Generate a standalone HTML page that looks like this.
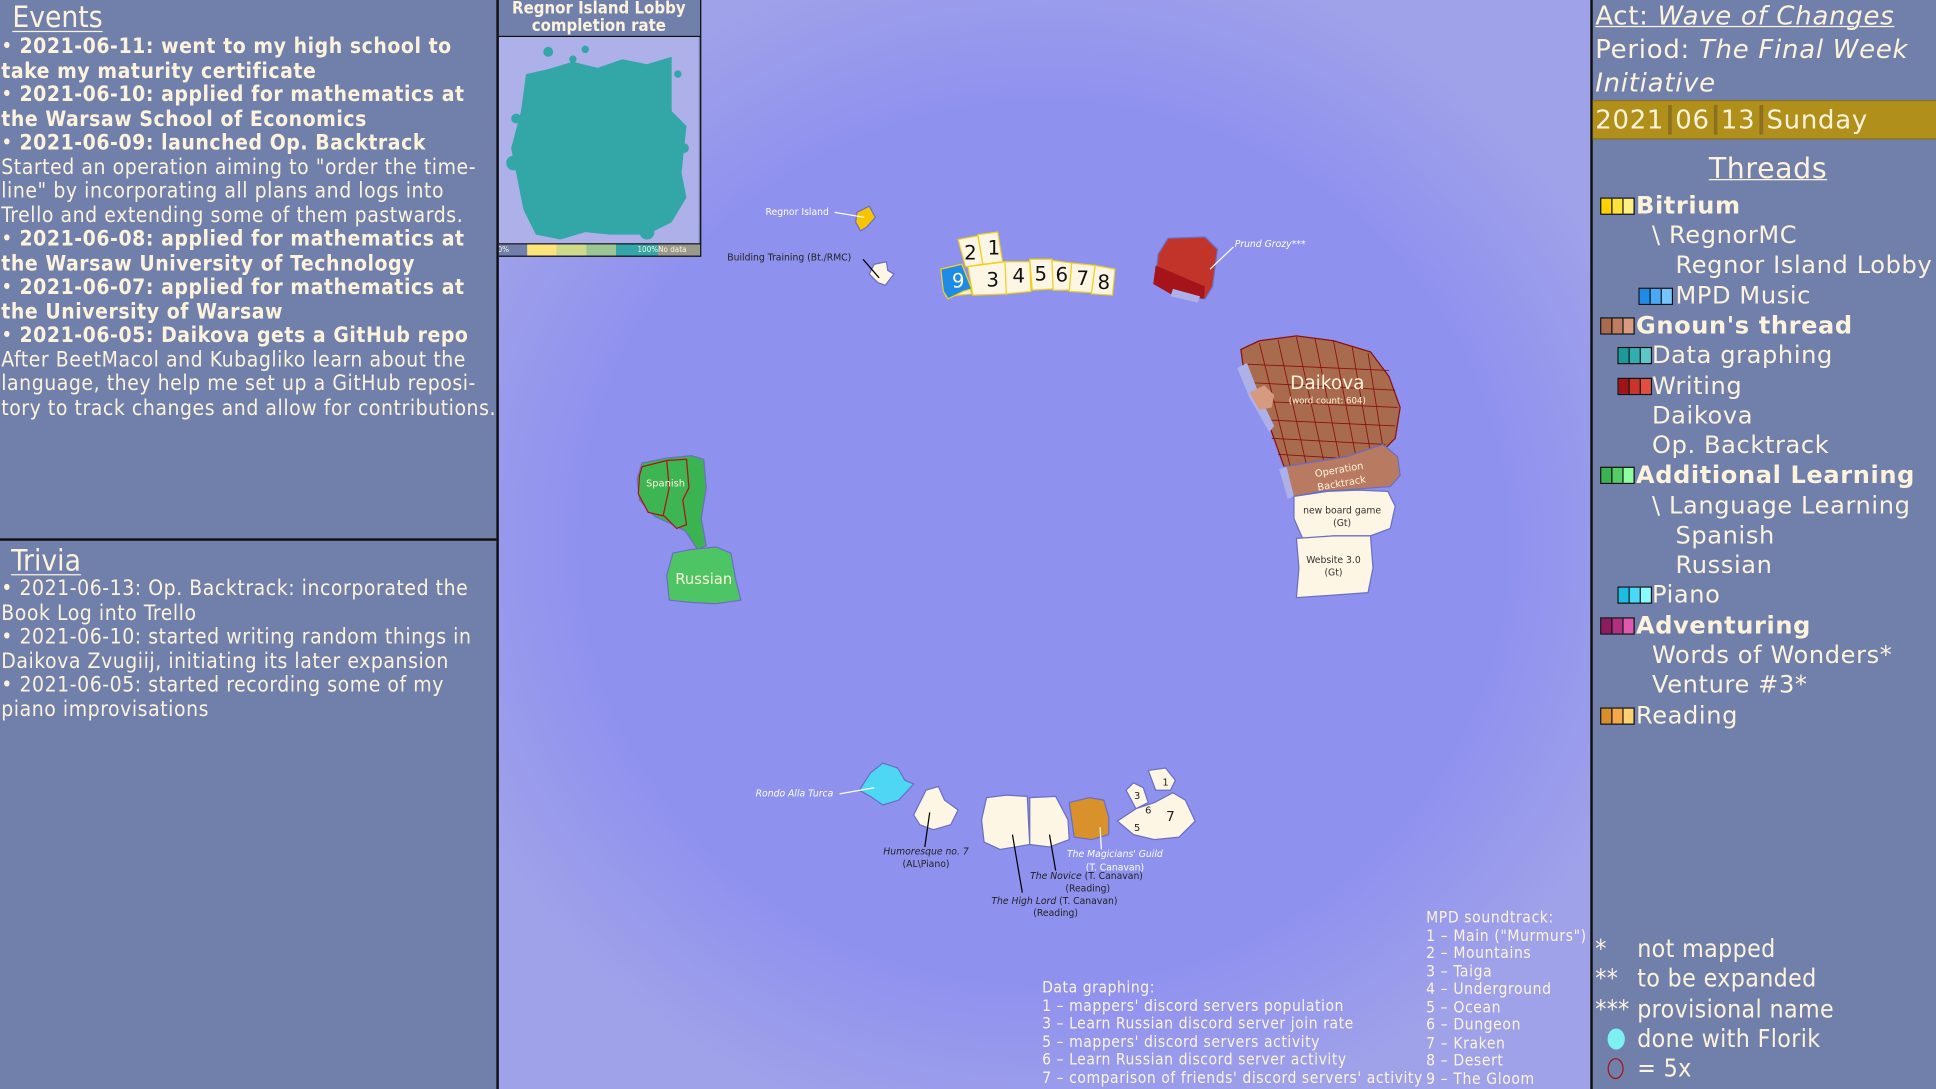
<!DOCTYPE html>
<html><head><meta charset="utf-8"><style>
html,body{margin:0;padding:0;width:1936px;height:1089px;overflow:hidden;background:#9092ee}
#w{position:absolute;left:0;top:0;width:1568px;height:882px;transform:scale(1.234694,1.234694);transform-origin:0 0;overflow:hidden}
.cond{font-family:"DejaVu Sans Condensed","DejaVu Sans","Liberation Sans",sans-serif;font-stretch:condensed}
.panel{position:absolute;background:#7180ab;color:#fdf3dc}
#left{left:0;top:0;width:402px;height:882px;border-right:2px solid #111}
#left .t{position:absolute;left:1px;font-size:17px;letter-spacing:0.45px;line-height:19.5px;white-space:nowrap}
#left b{font-weight:bold}
h1{position:absolute;margin:0;font-weight:normal;text-decoration:underline;text-decoration-thickness:1px;text-underline-offset:3px;font-size:24px;line-height:28px}
#right{left:1288px;top:0;width:280px;height:882px;border-left:2px solid #111;font-family:"DejaVu Sans",sans-serif;letter-spacing:0.5px}
#right .l{position:absolute;white-space:nowrap;font-size:19.5px;line-height:24px}
.sw{position:absolute;width:26px;height:12px;border:1px solid #111;display:flex}
.sw i{flex:1;border-right:1px solid #111}.sw i:last-child{border:0}
</style></head><body><div id="w">
<svg width="1568" height="882" style="position:absolute;left:0;top:0" font-family="DejaVu Sans, sans-serif">
<defs><radialGradient id="g" cx="845" cy="440" r="520" gradientUnits="userSpaceOnUse" gradientTransform="translate(845 440) scale(1 0.95) translate(-845 -440)">
<stop offset="0.72" stop-color="#8f91ef"/><stop offset="1" stop-color="#a0a2e9"/></radialGradient></defs>
<rect width="1568" height="882" fill="url(#g)"/>
<polygon points="694,172 704,167 709,176 702,184 697,187 693,180" fill="#f6c400" stroke="#6c6fc0"/>
<line x1="676" y1="172" x2="700" y2="176" stroke="#fff"/>
<text x="620" y="174" font-size="7.5" fill="#fff">Regnor Island</text>
<polygon points="708,214 718,212 719,219 724,222 717,231 711,229 704,222" fill="#fdf6e4" stroke="#6c6fc0"/>
<line x1="699" y1="210" x2="712" y2="225" stroke="#000"/>
<text x="589" y="211" font-size="7.5" fill="#222">Building Training (Bt./RMC)</text>
<g stroke="#f0d020" stroke-width="1" fill="#fdf6e4">
<polygon points="776,194 792,191 796,214 782,216"/>
<polygon points="792,190 808,188 812,212 796,214"/>
<polygon points="762,218 779,214 787,238 766,240"/>
<polygon points="784,216 814,212 816,238 788,239" />
<polygon points="814,212 834,212 835,236 815,238"/>
<polygon points="834,210 852,210 853,234 836,235"/>
<polygon points="852,211 868,213 866,235 853,235"/>
<polygon points="868,213 887,215 884,237 866,236"/>
<polygon points="887,215 903,218 901,239 884,238"/>
</g>
<polygon points="762,218 779,214 787,234 780,236 768,242 764,236" fill="#1e8be6" stroke="#f0d020"/>
<g font-size="16" fill="#111" text-anchor="middle">
<text x="786" y="210">2</text><text x="805" y="206">1</text><text x="776" y="233" fill="#fff">9</text>
<text x="804" y="232">3</text><text x="825" y="229">4</text><text x="843" y="227">5</text><text x="860" y="228">6</text><text x="877" y="231">7</text><text x="894" y="234">8</text></g>
<polygon points="946,193 976,192 986,202 982,232 976,242 948,238 936,225 938,206" fill="#c2342a" stroke="#6c6fc0"/>
<polygon points="936,215 976,232 975,242 948,238 934,230" fill="#a5141a"/>
<polygon points="950,234 972,240 970,245 948,240" fill="#aeb0ea"/>
<line x1="980" y1="218" x2="999" y2="200" stroke="#fff"/>
<text x="1000" y="200" font-size="7.5" font-style="italic" fill="#fff">Prund Grozy***</text>
<polygon points="1005,283 1020,276 1050,272 1080,276 1110,285 1125,305 1134,330 1130,355 1120,365 1090,370 1060,375 1040,378 1030,350 1020,325 1008,305" fill="#a86b4e" stroke="#8a1010" stroke-width="1"/>
<g stroke="#8a1010" stroke-width="0.7" fill="none">
<path d="M1010,295 L1125,300 M1014,310 L1130,316 M1018,325 L1132,330 M1024,340 L1130,345 M1030,355 L1122,360 M1035,368 L1100,372"/>
<path d="M1020,278 L1045,378 M1035,275 L1058,376 M1050,273 L1072,373 M1065,274 L1085,372 M1080,276 L1098,369 M1095,280 L1110,367 M1108,286 L1120,362"/>
</g>
<polygon points="1002,298 1010,294 1020,320 1032,345 1028,350 1012,322" fill="#aeb0ea"/>
<path d="M1012,318 L1024,312 L1032,320 L1030,330 L1020,332 Z" fill="#d59a80"/>
<text x="1075" y="315" font-size="15" fill="#fdf3dc" text-anchor="middle">Daikova</text>
<text x="1075" y="327" font-size="7" fill="#fdf3dc" text-anchor="middle">(word count: 604)</text>
<path d="M1040,378 L1090,370 L1120,360 L1132,370 L1134,385 L1126,394 L1100,396 L1070,398 L1048,402 L1042,392 Z" fill="#b97a62" stroke="#6c6fc0"/>
<polygon points="1036,380 1042,378 1048,402 1043,404" fill="#aeb0ea"/>
<text x="1085" y="383" font-size="8" fill="#fdf3dc" text-anchor="middle" transform="rotate(-10 1085 383)">Operation</text>
<text x="1087" y="394" font-size="8" fill="#fdf3dc" text-anchor="middle" transform="rotate(-10 1087 394)">Backtrack</text>
<path d="M1048,402 L1075,398 L1100,397 L1124,398 L1130,410 L1126,428 L1110,434 L1080,434 L1055,436 L1048,420 Z" fill="#fdf6e4" stroke="#6c6fc0"/>
<text x="1087" y="416" font-size="7.5" fill="#333" text-anchor="middle">new board game</text>
<text x="1087" y="426" font-size="7.5" fill="#333" text-anchor="middle">(Gt)</text>
<path d="M1050,436 L1080,434 L1110,434 L1112,460 L1108,480 L1080,482 L1050,484 L1052,460 Z" fill="#fdf6e4" stroke="#6c6fc0"/>
<text x="1080" y="456" font-size="7.5" fill="#333" text-anchor="middle">Website 3.0</text>
<text x="1080" y="466" font-size="7.5" fill="#333" text-anchor="middle">(Gt)</text>
<path d="M520,375 L540,371 L560,369 L570,372 L572,395 L568,420 L572,442 L565,445 L555,430 L545,425 L530,418 L518,405 L516,388 Z" fill="#3bb350" stroke="#6c6fc0"/>
<path d="M520,378 L540,373 L556,372 L558,395 L553,405 L556,425 L548,428 L538,418 L525,415 L517,400 L518,385 Z" fill="#3db553" stroke="#b0121a" stroke-width="1"/>
<path d="M540,373 L542,395 L537,418" stroke="#b0121a" fill="none"/>
<text x="539" y="394" font-size="8" fill="#fdf3dc" text-anchor="middle">Spanish</text>
<path d="M545,448 L560,445 L580,443 L592,448 L596,470 L600,486 L580,489 L560,488 L542,486 L540,466 Z" fill="#4ec565" stroke="#6c6fc0"/>
<text x="570" y="473" font-size="12" fill="#fdf3dc" text-anchor="middle">Russian</text>
<path d="M705,626 L715,618 L727,622 L733,632 L740,635 L728,648 L715,652 L705,645 L696,640 Z" fill="#4dd7f5" stroke="#6c6fc0"/>
<line x1="680" y1="643" x2="708" y2="638" stroke="#fff"/>
<text x="612" y="645" font-size="7.5" font-style="italic" fill="#fff">Rondo Alla Turca</text>
<path d="M750,640 L760,637 L765,648 L776,656 L770,668 L756,672 L745,668 L740,660 Z" fill="#fdf6e4" stroke="#6c6fc0"/>
<line x1="753" y1="658" x2="749" y2="686" stroke="#000"/>
<text x="750" y="692" font-size="7.5" font-style="italic" fill="#222" text-anchor="middle">Humoresque no. 7</text>
<text x="750" y="702" font-size="7.5" fill="#222" text-anchor="middle">(AL\Piano)</text>
<path d="M799,646 L815,644 L832,645 L834,684 L810,688 L797,682 L795,664 Z" fill="#fdf6e4" stroke="#6c6fc0"/>
<path d="M834,646 L855,645 L865,664 L866,680 L850,686 L834,684 Z" fill="#fdf6e4" stroke="#6c6fc0"/>
<path d="M866,650 L882,646 L894,648 L898,662 L898,676 L884,680 L870,678 Z" fill="#d9912c" stroke="#6c6fc0"/>
<path d="M912,640 L918,634 L926,638 L930,650 L920,655 Z M930,624 L944,622 L952,632 L948,640 L936,640 Z M920,655 L935,650 L950,642 L960,648 L968,665 L955,678 L935,680 L918,676 L905,665 Z" fill="#fdf6e4" stroke="#6c6fc0"/>
<g font-size="8" fill="#222" text-anchor="middle"><text x="921" y="647">3</text><text x="944" y="636">1</text><text x="930" y="659">6</text><text x="921" y="673">5</text><text x="948" y="665" font-size="11">7</text></g>
<g stroke="#000"><line x1="820" y1="676" x2="828" y2="723"/><line x1="850" y1="676" x2="855" y2="705"/></g>
<line x1="891" y1="670" x2="892" y2="688" stroke="#fff"/>
<g font-size="7.5" fill="#222" text-anchor="middle">
<text x="903" y="694" fill="#fff"><tspan font-style="italic">The Magicians' Guild</tspan></text>
<text x="903" y="705" fill="#fff">(T. Canavan)</text>
<text x="880" y="712"><tspan font-style="italic">The Novice</tspan> (T. Canavan)</text>
<text x="881" y="722">(Reading)</text>
<text x="854" y="732"><tspan font-style="italic">The High Lord</tspan> (T. Canavan)</text>
<text x="855" y="742">(Reading)</text></g>
</svg>

<div class="cond" style="position:absolute;left:844px;top:793px;font-size:12.6px;letter-spacing:0.45px;line-height:14.6px;color:#fdf3dc;white-space:nowrap">Data graphing:<br>1 – mappers' discord servers population<br>3 – Learn Russian discord server join rate<br>5 – mappers' discord servers activity<br>6 – Learn Russian discord server activity<br>7 – comparison of friends' discord servers' activity</div>
<div class="cond" style="position:absolute;left:1155px;top:736px;font-size:12.6px;letter-spacing:0.5px;line-height:14.5px;color:#fdf3dc;white-space:nowrap">MPD soundtrack:<br>1 – Main ("Murmurs")<br>2 – Mountains<br>3 – Taiga<br>4 – Underground<br>5 – Ocean<br>6 – Dungeon<br>7 – Kraken<br>8 – Desert<br>9 – The Gloom</div>

<div style="position:absolute;left:403px;top:0;width:164px;height:208px;background:#7180ab;border-right:1px solid #111">
<div class="cond" style="position:absolute;left:0;top:0;width:164px;text-align:center;font-weight:bold;font-size:13.5px;line-height:14px;color:#fdf3dc">Regnor Island Lobby<br>completion rate</div>
<div style="position:absolute;left:0;top:29px;width:164px;height:1px;background:#111"></div>
<svg style="position:absolute;left:1px;top:30px" width="162" height="168"><rect width="162" height="168" fill="#aeb0ea"/>
<path d="M22,30 L40,26 L60,20 L80,25 L100,18 L120,22 L140,16 L140,60 L152,72 L148,110 L152,130 L140,150 L120,160 L90,160 L70,158 L50,164 L30,160 L20,140 L14,110 L10,90 L18,60 Z" fill="#33a6a7"/>
<g fill="#33a6a7"><circle cx="40" cy="12" r="4"/><circle cx="60" cy="18" r="3"/><circle cx="70" cy="10" r="3"/><circle cx="12" cy="102" r="6"/><circle cx="120" cy="158" r="6"/><circle cx="14" cy="66" r="4"/><circle cx="150" cy="90" r="4"/><circle cx="145" cy="30" r="3"/></g>
<rect x="40" y="30" width="2" height="20" fill="#33a6a7"/>
</svg>
<div style="position:absolute;left:0;top:197px;width:164px;height:1px;background:#111"></div>
<div style="position:absolute;left:0;top:198px;width:164px;height:9px;display:flex;font-family:'DejaVu Sans Condensed',sans-serif;font-size:6.5px;color:#fdf3dc;line-height:9px">
<div style="width:24px;background:#7180ab">0%</div><div style="width:24px;background:#fbe57a"></div><div style="width:24px;background:#cfdb8c"></div><div style="width:24px;background:#9bc794"></div><div style="width:34px;background:#33a6a7;text-align:right">100%</div><div style="flex:1;background:#9a9a8c">No data</div></div>
<div style="position:absolute;left:0;top:207px;width:164px;height:1px;background:#111"></div>
</div>

<div id="left" class="panel cond">
<h1 style="left:10px;top:0">Events</h1>
<div class="t" style="top:29px">• <b>2021-06-11: went to my high school to</b><br><b>take my maturity certificate</b><br>• <b>2021-06-10: applied for mathematics at</b><br><b>the Warsaw School of Economics</b><br>• <b>2021-06-09: launched Op. Backtrack</b><br>Started an operation aiming to "order the time-<br>line" by incorporating all plans and logs into<br>Trello and extending some of them pastwards.<br>• <b>2021-06-08: applied for mathematics at</b><br><b>the Warsaw University of Technology</b><br>• <b>2021-06-07: applied for mathematics at</b><br><b>the University of Warsaw</b><br>• <b>2021-06-05: Daikova gets a GitHub repo</b><br>After BeetMacol and Kubagliko learn about the<br>language, they help me set up a GitHub reposi-<br>tory to track changes and allow for contributions.</div>
<div style="position:absolute;left:0;top:436px;width:402px;height:2px;background:#111"></div>
<h1 style="left:9px;top:440px">Trivia</h1>
<div class="t" style="top:468px">• 2021-06-13: Op. Backtrack: incorporated the<br>Book Log into Trello<br>• 2021-06-10: started writing random things in<br>Daikova Zvugiij, initiating its later expansion<br>• 2021-06-05: started recording some of my<br>piano improvisations</div>
</div>

<div id="right" class="panel">
<div class="l" style="left:2px;top:0;font-size:21px;line-height:27px;letter-spacing:0.6px"><span style="text-decoration:underline;text-decoration-thickness:1px">Act: <i>Wave of Changes</i></span><br>Period: <i>The Final Week</i><br><i>Initiative</i></div>
<div style="position:absolute;left:0;top:81px;width:280px;height:30px;background:#b08f1a;border-top:1px solid #8a7020;border-bottom:1px solid #8a7020"></div>
<div class="l" style="left:2px;top:84px;font-size:21px;line-height:26px;letter-spacing:0.6px">2021<span style="border-left:3px solid #8a7020;margin:0 3px"></span>06<span style="border-left:3px solid #8a7020;margin:0 3px"></span>13<span style="border-left:3px solid #8a7020;margin:0 3px"></span>Sunday</div>
<div class="l" style="left:94px;top:123px;font-size:23px;line-height:28px;text-decoration:underline;text-decoration-thickness:1px">Threads</div>
<div class="sw" style="left:6px;top:160px"><i style="background:#ffd200"></i><i style="background:#ffe33c"></i><i style="background:#fff080"></i></div>
<div class="sw" style="left:37px;top:233px"><i style="background:#1e8be6"></i><i style="background:#4aa8f5"></i><i style="background:#76c4fa"></i></div>
<div class="sw" style="left:6px;top:257px"><i style="background:#a86b4e"></i><i style="background:#bf7d63"></i><i style="background:#d89a80"></i></div>
<div class="sw" style="left:20px;top:281px"><i style="background:#1a9a9a"></i><i style="background:#32aeb0"></i><i style="background:#5ec8c8"></i></div>
<div class="sw" style="left:20px;top:306px"><i style="background:#a01418"></i><i style="background:#c6342a"></i><i style="background:#e05040"></i></div>
<div class="sw" style="left:6px;top:378px"><i style="background:#3bb350"></i><i style="background:#55cc66"></i><i style="background:#8effa0"></i></div>
<div class="sw" style="left:20px;top:475px"><i style="background:#1ebce0"></i><i style="background:#4ad8f8"></i><i style="background:#8afcfc"></i></div>
<div class="sw" style="left:6px;top:500px"><i style="background:#8e1a60"></i><i style="background:#b03080"></i><i style="background:#e058b0"></i></div>
<div class="sw" style="left:6px;top:573px"><i style="background:#d98e2c"></i><i style="background:#f5a84a"></i><i style="background:#ffd070"></i></div>
<div class="l" style="left:35px;top:155px;font-weight:bold">Bitrium</div>
<div class="l" style="left:48px;top:179px">\ RegnorMC</div>
<div class="l" style="left:67px;top:203px">Regnor Island Lobby</div>
<div class="l" style="left:67px;top:228px">MPD Music</div>
<div class="l" style="left:35px;top:252px;font-weight:bold">Gnoun's thread</div>
<div class="l" style="left:48px;top:276px">Data graphing</div>
<div class="l" style="left:48px;top:301px">Writing</div>
<div class="l" style="left:48px;top:325px">Daikova</div>
<div class="l" style="left:48px;top:349px">Op. Backtrack</div>
<div class="l" style="left:35px;top:373px;font-weight:bold">Additional Learning</div>
<div class="l" style="left:48px;top:398px">\ Language Learning</div>
<div class="l" style="left:67px;top:422px">Spanish</div>
<div class="l" style="left:67px;top:446px">Russian</div>
<div class="l" style="left:48px;top:470px">Piano</div>
<div class="l" style="left:35px;top:495px;font-weight:bold">Adventuring</div>
<div class="l" style="left:48px;top:519px">Words of Wonders*</div>
<div class="l" style="left:48px;top:543px">Venture #3*</div>
<div class="l" style="left:35px;top:568px">Reading</div>
<div class="cond" style="position:absolute;left:2px;top:756px;font-size:20px;line-height:24.3px;letter-spacing:0.3px;white-space:nowrap">
<div>*<span style="position:absolute;left:34px">not mapped</span></div>
<div>**<span style="position:absolute;left:34px">to be expanded</span></div>
<div>***<span style="position:absolute;left:34px">provisional name</span></div>
<div><span style="display:inline-block;width:14px;height:17px;border-radius:50%;background:#7ef0f4;margin-left:10px;vertical-align:-2px"></span><span style="position:absolute;left:34px">done with Florik</span></div>
<div><span style="display:inline-block;width:13px;height:17px;border-radius:50%;border:1px solid #a01418;margin-left:10px;vertical-align:-2px;box-sizing:border-box"></span><span style="position:absolute;left:34px">= 5x</span></div>
</div>
</div>
</div></body></html>
